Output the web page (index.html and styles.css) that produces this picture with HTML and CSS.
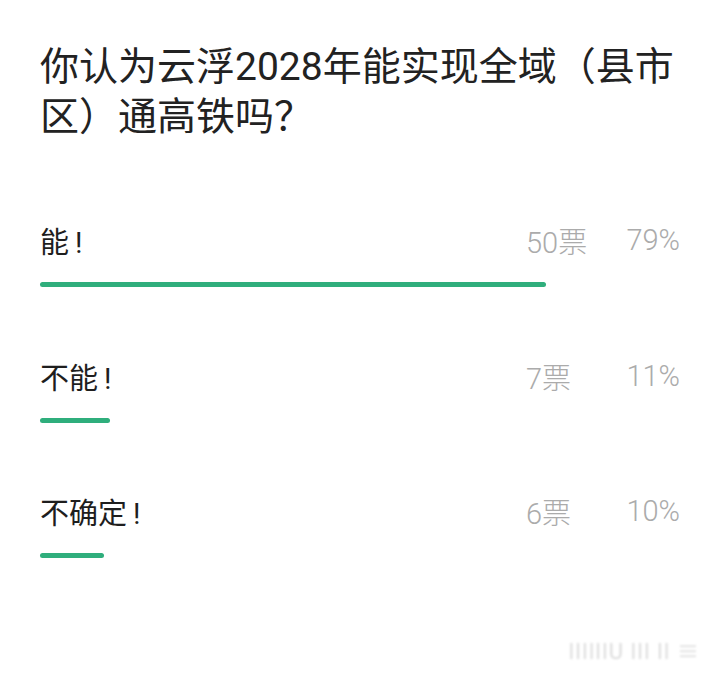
FILE: index.html
```html
<!DOCTYPE html>
<html lang="zh-CN">
<head>
<meta charset="utf-8">
<link rel="stylesheet" href="styles.css">
</head>
<body>
<main class="poll">
  <h1 class="title">你认为云浮2028年能实现全域（县市区）通高铁吗？</h1>
  <ul class="options">
    <li class="option">
      <div class="row">
        <span class="label">能<span class="bang">!</span></span>
        <span class="votes">50票</span>
        <span class="pct">79%</span>
      </div>
      <div class="track"><div class="bar" style="width:79%"></div></div>
    </li>
    <li class="option">
      <div class="row">
        <span class="label">不能<span class="bang">!</span></span>
        <span class="votes">7票</span>
        <span class="pct">11%</span>
      </div>
      <div class="track"><div class="bar" style="width:11%"></div></div>
    </li>
    <li class="option">
      <div class="row">
        <span class="label">不确定<span class="bang">!</span></span>
        <span class="votes">6票</span>
        <span class="pct">10%</span>
      </div>
      <div class="track"><div class="bar" style="width:10%"></div></div>
    </li>
  </ul>
  <div class="mark">ǀǀǀǀǀǀU ǀǀǀ ǀǀ ≡</div>
</main>
</body>
</html>
```
FILE: styles.css
```css
html, body {
  margin: 0;
  padding: 0;
  background: #ffffff;
}
body {
  width: 720px;
  height: 677px;
  overflow: hidden;
  font-family: Roboto, "Noto Sans CJK SC", sans-serif;
  color: #222222;
}
.poll {
  position: relative;
  height: 677px;
  box-sizing: border-box;
  padding: 42px 40px 0 40px;
}
.title {
  margin: 0;
  font-size: 39px;
  font-weight: 400;
  line-height: 50px;
  color: #222222;
}
.options {
  list-style: none;
  margin: 78px 0 0 0;
  padding: 0;
  display: flex;
  flex-direction: column;
  gap: 68.5px;
}
.row {
  display: flex;
  align-items: center;
  height: 40px;
  font-size: 29px;
}
.label {
  flex: 1;
  color: #1e1e1e;
}
.bang {
  margin-left: 6px;
}
.votes {
  width: 94px;
  color: #ababab;
  font-weight: 300;
}
.pct {
  width: 60px;
  text-align: right;
  color: #ababab;
  font-weight: 300;
}
.track {
  margin-top: 22px;
  height: 5px;
}
.bar {
  height: 5px;
  border-radius: 3px;
  background: #2fae7c;
}
.mark {
  position: absolute;
  right: 20px;
  bottom: 12px;
  font-size: 22px;
  color: #999;
  opacity: 0.35;
  filter: blur(1px);
  letter-spacing: 1px;
}
```
